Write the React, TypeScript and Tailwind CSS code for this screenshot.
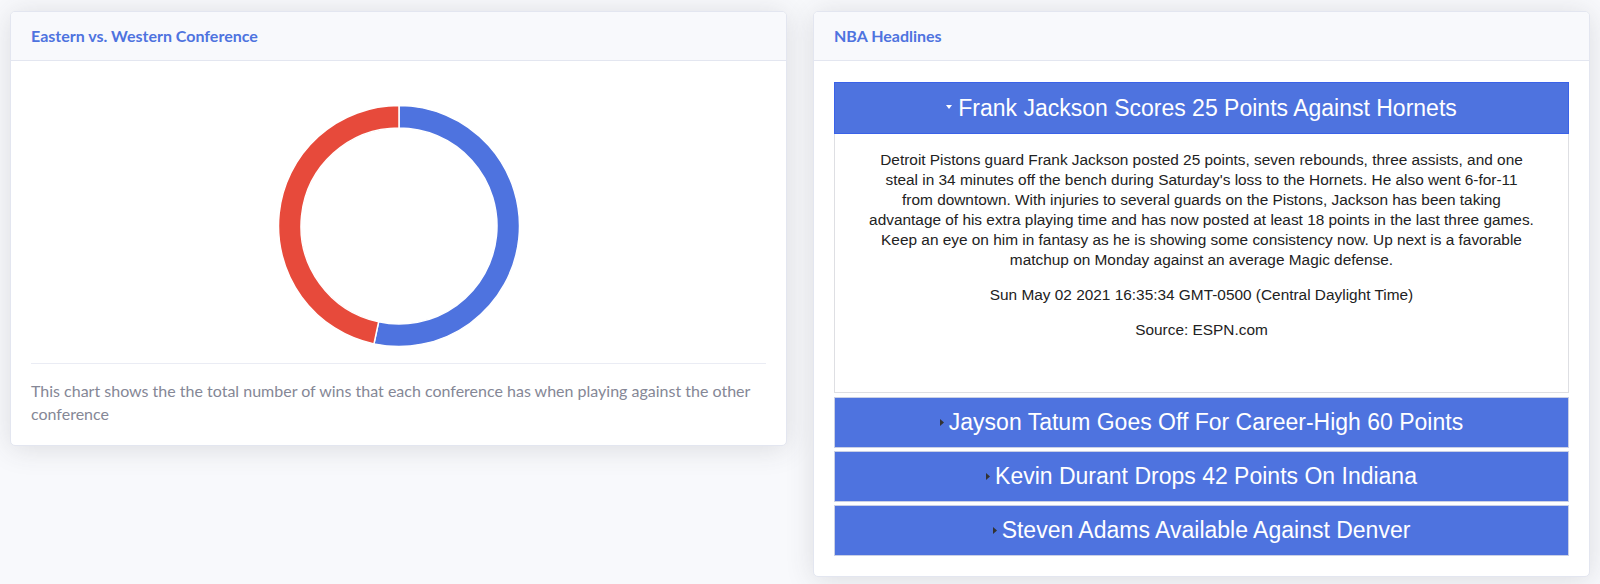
import React from 'react';

const headlines = [
  'Jayson Tatum Goes Off For Career-High 60 Points',
  'Kevin Durant Drops 42 Points On Indiana',
  'Steven Adams Available Against Denver',
];

const story = [
  'Detroit Pistons guard Frank Jackson posted 25 points, seven rebounds, three assists, and one',
  "steal in 34 minutes off the bench during Saturday's loss to the Hornets. He also went 6-for-11",
  'from downtown. With injuries to several guards on the Pistons, Jackson has been taking',
  'advantage of his extra playing time and has now posted at least 18 points in the last three games.',
  'Keep an eye on him in fantasy as he is showing some consistency now. Up next is a favorable',
  'matchup on Monday against an average Magic defense.',
];

function point(cx: number, cy: number, r: number, deg: number) {
  const a = (deg * Math.PI) / 180;
  return [cx + r * Math.sin(a), cy - r * Math.cos(a)];
}

function slice(start: number, end: number, outer: number, inner: number) {
  const c = 121;
  const [x1, y1] = point(c, c, outer, start);
  const [x2, y2] = point(c, c, outer, end);
  const [x3, y3] = point(c, c, inner, end);
  const [x4, y4] = point(c, c, inner, start);
  const large = end - start > 180 ? 1 : 0;
  return `M${x1} ${y1} A${outer} ${outer} 0 ${large} 1 ${x2} ${y2} L${x3} ${y3} A${inner} ${inner} 0 ${large} 0 ${x4} ${y4} Z`;
}

function Donut() {
  return (
    <svg width="242" height="242" viewBox="0 0 242 242">
      <path d={slice(0, 192, 120.5, 98)} fill="#4e73df" stroke="#fff" strokeWidth="1.5" />
      <path d={slice(192, 360, 120.5, 98)} fill="#e74a3b" stroke="#fff" strokeWidth="1.5" />
    </svg>
  );
}

function CardHeader({ title }: { title: string }) {
  return (
    <div className="bg-[#f8f9fc] border-b border-[#e3e6f0] px-5 py-3">
      <h6 className="text-base leading-6 font-bold text-[#4e73df] font-['Lato',sans-serif]">{title}</h6>
    </div>
  );
}

export default function App() {
  return (
    <div className="min-h-screen bg-[#f8f9fc] px-[10px] pt-[11px] grid grid-cols-2 gap-[26px] items-start">
      {/* Conference chart */}
      <div className="bg-white border border-[#e3e6f0] rounded-[5px] shadow-[0_0.15rem_1.75rem_0_rgba(58,59,69,0.15)] overflow-hidden">
        <CardHeader title="Eastern vs. Western Conference" />
        <div className="p-5">
          <div className="flex justify-center pt-6">
            <Donut />
          </div>
          <hr className="mt-4 border-t border-[#eaecf4]" />
          <p className="mt-4 text-[16px] leading-[22.5px] text-[#858796] font-['Lato',sans-serif]">
            This chart shows the the total number of wins that each conference has when playing against the other conference
          </p>
        </div>
      </div>

      {/* Headlines */}
      <div className="bg-white border border-[#e3e6f0] rounded-[5px] shadow-[0_0.15rem_1.75rem_0_rgba(58,59,69,0.15)] overflow-hidden">
        <CardHeader title="NBA Headlines" />
        <div className="px-5 pt-[21px] pb-5 font-['Liberation_Sans',Arial,sans-serif]">
          <div className="h-[52px] bg-[#4e73df] border border-[#3a62e8] flex items-center justify-center gap-[6px] text-white text-[23px]">
            <svg width="6" height="4" viewBox="0 0 6 4" className="mb-[3px]">
              <path d="M0 0 L6 0 L3 4 Z" fill="#fff" />
            </svg>
            <span>Frank Jackson Scores 25 Points Against Hornets</span>
          </div>
          <div className="h-[259px] border border-t-0 border-[#dedfe3] bg-white pt-4 text-center text-[15.4px] leading-5 text-[#222]">
            <p className="whitespace-nowrap">
              {story.map((line, i) => (
                <React.Fragment key={i}>
                  {line}
                  {i < story.length - 1 && <br />}
                </React.Fragment>
              ))}
            </p>
            <p className="mt-[15px]">Sun May 02 2021 16:35:34 GMT-0500 (Central Daylight Time)</p>
            <p className="mt-[15px]">Source: ESPN.com</p>
          </div>
          <div className="mt-[4px] flex flex-col gap-[3px]">
            {headlines.map((h) => (
              <div key={h} className="h-[51px] bg-[#4e73df] border border-[#c9d0e6] flex items-center justify-center gap-[5px] text-white text-[23px]">
                <svg width="4" height="7" viewBox="0 0 4 7">
                  <path d="M0 0 L4 3.5 L0 7 Z" fill="#333" />
                </svg>
                <span>{h}</span>
              </div>
            ))}
          </div>
        </div>
      </div>
    </div>
  );
}
